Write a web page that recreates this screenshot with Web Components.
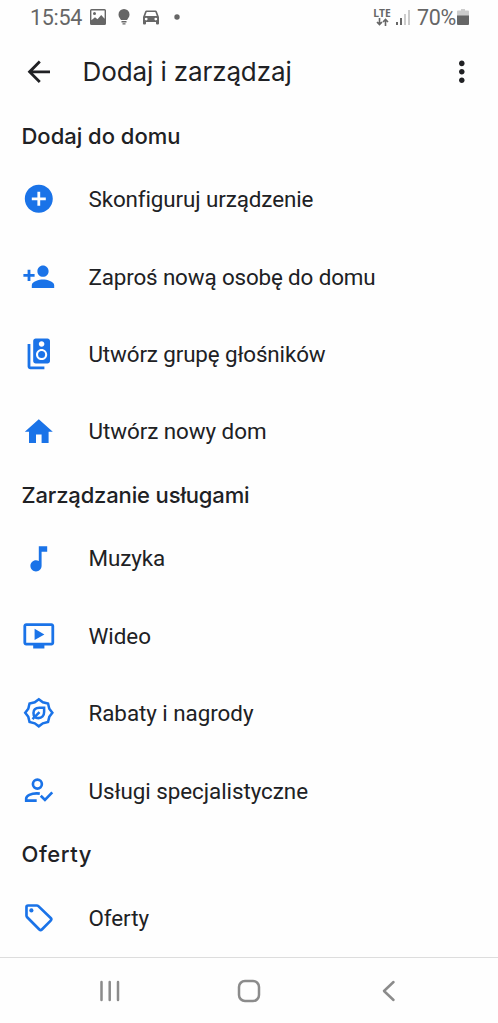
<!DOCTYPE html>
<html lang="pl">
<head>
<meta charset="utf-8">
<title>Dodaj i zarządzaj</title>
<style>
html,body{margin:0;height:100%;background:#fefefe}
body{font-family:Roboto,sans-serif;color:#202124;overflow:hidden}
</style>
</head>
<body>
<home-screen></home-screen>
<script>
const define = (name, html, init) => {
  const tpl = document.createElement('template');
  tpl.innerHTML = html;
  customElements.define(name, class extends HTMLElement {
    constructor() {
      super();
      this.attachShadow({mode: 'open'}).append(tpl.content.cloneNode(true));
    }
    connectedCallback() { if (init) init(this, this.shadowRoot); }
  });
};

/* Label whose tracking adapts so that the line takes a given width */
define('fit-label', `<style>:host{display:block;white-space:nowrap}span{display:inline-block}</style><span></span>`, (el, root) => {
  const s = root.querySelector('span');
  s.textContent = el.getAttribute('text');
  const want = parseFloat(el.getAttribute('width'));
  const n = s.textContent.length;
  s.style.letterSpacing = ((want - s.getBoundingClientRect().width) / n) + 'px';
});

const icons = {
  add: '<path d="M12 2C6.48 2 2 6.48 2 12s4.48 10 10 10 10-4.48 10-10S17.52 2 12 2zm5 11h-4v4h-2v-4H7v-2h4V7h2v4h4v2z"/>',
  person: '<path d="M15 12c2.21 0 4-1.79 4-4s-1.790-4-4-4-4 1.790-4 4 1.790 4 4 4zm-9-2V7H4v3H1v2h3v3h2v-3h3v-2H6zm9 4c-2.670 0-8 1.340-8 4v2h16v-2c0-2.660-5.330-4-8-4z"/>',
  speaker: '<path d="M18.200 1H9.800C8.810 1 8 1.810 8 2.800v14.400c0 .990.810 1.790 1.800 1.790l8.400.010c.990 0 1.800-.810 1.800-1.800V2.800c0-.990-.810-1.800-1.800-1.800zM14 3c1.100 0 2 .890 2 2s-.900 2-2 2-2-.890-2-2 .900-2 2-2zm0 13.500c-2.210 0-4-1.790-4-4s1.790-4 4-4 4 1.790 4 4-1.790 4-4 4z"/><circle cx="14" cy="12.500" r="2.500"/><path d="M6 5H4v16c0 1.100.890 2 2 2h10v-2H6V5z"/>',
  home: '<path d="M10 20v-6h4v6h5v-8h3L12 3 2 12h3v8z"/>',
  music: '<path d="M12 3v10.550c-.590-.340-1.270-.550-2-.550-2.210 0-4 1.790-4 4s1.790 4 4 4 4-1.790 4-4V7h4V3h-6z"/>',
  video: '<path d="M21 3H3c-1.110 0-2 .890-2 2v12c0 1.100.890 2 2 2h5v2h8v-2h5c1.100 0 1.990-.900 1.990-2L23 5c0-1.110-.900-2-2-2zm0 14H3V5h18v12zm-5-6-7 4V7z"/>',
  reward: '<g fill="none" stroke="currentColor" stroke-width="1.800"><path d="M12 2.300 14.900 4.500 18.600 5.400 19.500 9.100 21.700 12 19.500 14.900 18.600 18.600 14.900 19.500 12 21.700 9.100 19.500 5.400 18.600 4.500 14.900 2.300 12 4.500 9.100 5.400 5.400 9.100 4.500Z"/><path d="M15.800 8.400h-3.400c-2.600 0-4.200 1.500-4.200 3.800s1.500 3.600 3.500 3.600c2.500 0 4.100-1.700 4.100-4.300zM7.500 16.500l5-5"/></g>',
  expert: '<g fill="none" stroke="currentColor" stroke-width="1.900"><circle cx="11" cy="7.200" r="3.200"/><path d="M10.500 19H3v-1.500c0-2 3.500-3.700 7.500-3.700.8 0 1.500.1 2.200.2M13.400 15.500l3 3 5.200-5.400"/></g>',
  tag: '<path fill="none" stroke="currentColor" stroke-width="1.900" stroke-linejoin="round" d="M4.300 3.200h6.200c.5 0 .9.200 1.200.5l8.800 8.500c.6.600.6 1.200 0 1.800l-6.300 6.400c-.6.600-1.200.6-1.800 0l-8.700-8.800c-.3-.3-.5-.7-.5-1.200V4.300c0-.6.400-1.100 1.100-1.100z"/><circle cx="6.700" cy="6.700" r="1.500"/>'
};

class ListSection extends HTMLElement {
  connectedCallback() {
    const root = this.attachShadow({mode: 'open'});
    root.innerHTML = `<style>
:host{display:block}
h2{margin:0;height:49.600px;display:flex;align-items:center;padding-left:21.500px;font:500 22px/30px Inter,Roboto,sans-serif}
</style><h2><fit-label text="${this.getAttribute('heading')}" width="${this.getAttribute('width')}"></fit-label></h2><slot></slot>`;
  }
}
customElements.define('list-section', ListSection);

class MenuItem extends HTMLElement {
  connectedCallback() {
    const root = this.attachShadow({mode: 'open'});
    root.innerHTML = `<style>
:host{display:flex;align-items:center;height:77.400px;padding-left:21.700px;font-size:22.400px;line-height:30px}
svg{width:33.600px;height:33.600px;fill:currentColor;color:#1a73e8;flex:none;margin-right:33.200px}
</style><svg viewBox="0 0 24 24">${icons[this.getAttribute('icon')]}</svg><fit-label text="${this.getAttribute('label')}" width="${this.getAttribute('width')}"></fit-label>`;
  }
}
customElements.define('menu-item', MenuItem);

define('status-bar', `<style>
:host{display:flex;height:34px;align-items:center;color:#666;font-size:21.500px;line-height:34px;padding:0 29px 0 30px;box-sizing:border-box}
svg{display:block;flex:none}
.big{padding-top:2px}
.sp{flex:1}
.net{display:flex;flex-direction:column;align-items:center;width:18px;margin-right:4px}
.net fit-label{font:700 10.300px/9px "Open Sans",sans-serif}
</style>
<fit-label class="big" text="15:54" width="52"></fit-label>
<svg style="margin-left:7px" width="18" height="18" viewBox="0 0 18 18"><path fill="#666" fill-rule="evenodd" d="M2.500 1h13Q17 1 17 2.500v13q0 1.500-1.500 1.500h-13Q1 17 1 15.500v-13Q1 1 2.500 1zM2.400 2.400v9.800L6 9.200l2.500 2 3.700-4.200 3.400 3.700V2.400zM5.500 4a1.500 1.500 0 1 1 0 3 1.500 1.500 0 0 1 0-3z"/></svg>
<svg style="margin-left:10px" width="14" height="18" viewBox="0 0 14 18"><path fill="#666" d="M7 1a5.500 5.500 0 0 1 5.500 5.500c0 2.500-1.500 3.700-2.500 5.500H4c-1-1.800-2.500-3-2.500-5.500A5.500 5.500 0 0 1 7 1zM4.500 13h5v1.500h-5zM5.500 15.200h3v1.300h-3z"/></svg>
<svg style="margin-left:11px" width="18" height="18" viewBox="0 0 18 18"><path fill="#666" fill-rule="evenodd" d="M4.500 2.500h9q1 0 1.400 1L17 9v6.500q0 1-1 1h-1q-1 0-1-1V14H4v1.500q0 1-1 1H2q-1 0-1-1V9l2.100-5.500q.4-1 1.400-1zM4.700 4 3.200 8h11.600l-1.500-4zM4.200 9.700a1.400 1.400 0 1 0 0 2.800 1.400 1.400 0 0 0 0-2.800zm9.600 0a1.400 1.400 0 1 0 0 2.800 1.400 1.400 0 0 0 0-2.800z"/></svg>
<svg style="margin-left:14px" width="6" height="6"><circle cx="3" cy="3" r="2.700" fill="#666"/></svg>
<span class="sp"></span>
<span class="net"><fit-label text="LTE" width="17.500"></fit-label><svg width="13" height="8" viewBox="0 0 13 8"><path fill="none" stroke="#666" stroke-width="1.600" d="M3.500 0v6M1 4l2.500 2.600L6 4M9.500 8V2M7 4l2.500-2.600L12 4"/></svg></span>
<svg width="16" height="18" viewBox="0 0 16 18"><path fill="#666" d="M1 14h2v3H1zM5 10h2v7H5z"/><path fill="#ccc" d="M9 6h2v11H9zM13 2h2v15h-2z"/></svg>
<fit-label class="big" style="margin-left:6px" text="70%" width="39"></fit-label>
<svg style="margin-left:1px" width="12" height="18" viewBox="0 0 12 18"><path fill="#ccc" d="M4 1h4v1.500h3q1 0 1 1V8H0V3.500q0-1 1-1h3z"/><path fill="#666" d="M0 7.500h12V16q0 1-1 1H1q-1 0-1-1z"/></svg>`);

define('app-bar', `<style>
:host{display:flex;align-items:center;height:77px;box-sizing:border-box;padding:0 19px 1px 22px;font:400 26px/36px Inter,Roboto,sans-serif}
svg{width:33.600px;height:33.600px;flex:none;fill:#202124}
fit-label{margin-left:27px;flex:1}
</style><svg viewBox="0 0 24 24"><path d="M20 11H7.830l5.590-5.590L12 4l-8 8 8 8 1.410-1.410L7.830 13H20v-2z"/></svg><fit-label text="Dodaj i zarządzaj" width="209"></fit-label><svg viewBox="0 0 24 24"><path d="M12 8c1.100 0 2-.9 2-2s-.9-2-2-2-2 .9-2 2 .9 2 2 2zm0 2c-1.100 0-2 .9-2 2s.9 2 2 2 2-.9 2-2-.9-2-2-2zm0 6c-1.100 0-2 .9-2 2s.9 2 2 2 2-.9 2-2-.9-2-2-2z"/></svg>`);

define('nav-bar', `<style>
:host{display:flex;align-items:center;justify-content:space-between;height:66px;box-sizing:border-box;border-top:1.500px solid #ddd;padding:1px 97px 0;background:#fefefe}
svg{display:block;fill:none;stroke:#8b8b8b;stroke-width:2.500;stroke-linecap:round;stroke-linejoin:round}
</style>
<svg width="26" height="26"><path d="M4.500 4v18M12.700 4v18M21 4v18"/></svg>
<svg width="26" height="26"><rect x="3" y="3" width="20" height="20" rx="6"/></svg>
<svg width="26" height="26"><path d="M18.500 4 9 13l9.500 9"/></svg>`);

define('home-screen', `<style>
:host{display:flex;flex-direction:column;height:1023px;width:498px;background:#fefefe}
main{flex:1;min-height:0;overflow:hidden}
status-bar,app-bar,nav-bar{flex:none}
</style>
<status-bar></status-bar><app-bar></app-bar>
<main>
<list-section heading="Dodaj do domu" width="159">
<menu-item icon="add" label="Skonfiguruj urządzenie" width="224"></menu-item>
<menu-item icon="person" label="Zaproś nową osobę do domu" width="287"></menu-item>
<menu-item icon="speaker" label="Utwórz grupę głośników" width="237"></menu-item>
<menu-item icon="home" label="Utwórz nowy dom" width="178"></menu-item>
</list-section>
<list-section heading="Zarządzanie usługami" width="228">
<menu-item icon="music" label="Muzyka" width="76.500"></menu-item>
<menu-item icon="video" label="Wideo" width="62.500"></menu-item>
<menu-item icon="reward" label="Rabaty i nagrody" width="165"></menu-item>
<menu-item icon="expert" label="Usługi specjalistyczne" width="219.500"></menu-item>
</list-section>
<list-section heading="Oferty" width="70.500">
<menu-item icon="tag" label="Oferty" width="60.500"></menu-item>
</list-section>
</main>
<nav-bar></nav-bar>`);
</script>
</body>
</html>
